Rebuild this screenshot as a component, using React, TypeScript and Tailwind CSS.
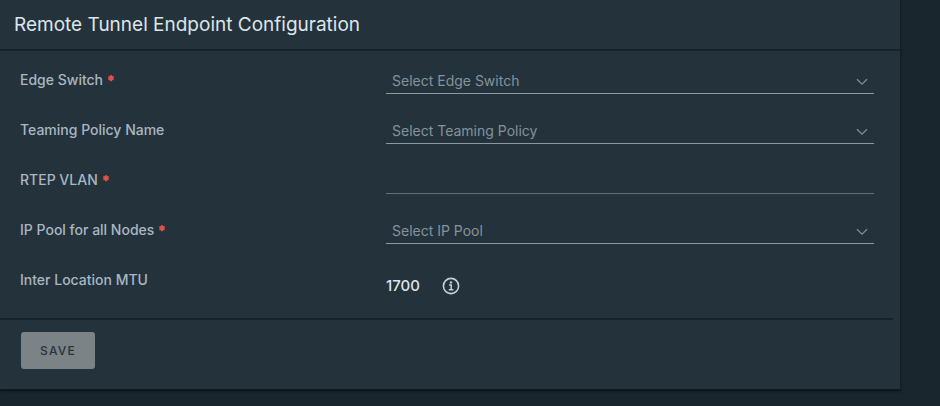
import type { FormEvent, ReactNode } from "react";

type RowProps = {
  label: string;
  htmlFor: string;
  required?: boolean;
  children: ReactNode;
};

function Row({ label, htmlFor, required, children }: RowProps) {
  return (
    <div className="grid min-h-[50px] grid-cols-[3fr_4fr] items-start">
      <label
        htmlFor={htmlFor}
        className="flex items-start gap-1 pt-1 text-sm leading-5 font-medium text-[#a9b7c2]"
      >
        {label}
        {required && (
          <svg viewBox="0 0 8 12" className="mt-1 h-3 w-2" aria-hidden="true">
            <path
              d="M4 1.2v6M1.4 2.7l5.2 3M6.6 2.7 1.4 5.7"
              stroke="#e0504a"
              strokeWidth="2"
              fill="none"
            />
          </svg>
        )}
      </label>
      {children}
    </div>
  );
}

function SelectField({ id, placeholder }: { id: string; placeholder: string }) {
  return (
    <div className="relative">
      <select
        id={id}
        defaultValue=""
        className="block h-7 w-full appearance-none border-b border-[#8a98a2] bg-transparent pt-[2px] pr-8 pl-[6px] text-sm text-[#84929b] outline-none"
      >
        <option value="">{placeholder}</option>
      </select>
      <svg
        viewBox="0 0 12 8"
        className="pointer-events-none absolute top-3 right-[6px] h-2 w-3"
        aria-hidden="true"
      >
        <path d="M1 1.2 6 6.2l5-5" stroke="#7f8e98" strokeWidth="1.3" fill="none" />
      </svg>
    </div>
  );
}

export default function App() {
  const handleSubmit = (event: FormEvent) => event.preventDefault();

  return (
    <div className="min-h-screen bg-[#1a262e] pr-10 font-['Inter','Liberation_Sans',sans-serif]">
      <form
        onSubmit={handleSubmit}
        className="border-b-2 border-[#0d181f] bg-[#24323c] shadow-[1px_1px_2px_#101b22]"
      >
        <header className="border-b-2 border-[#17232b] px-[14px] pt-[13px] pb-3">
          <h1 className="text-[19px] leading-6 font-normal text-[#dde5ea]">
            Remote Tunnel Endpoint Configuration
          </h1>
        </header>

        <div className="pt-[15px] pr-[26px] pl-5">
          <Row label="Edge Switch" htmlFor="edge-switch" required>
            <SelectField id="edge-switch" placeholder="Select Edge Switch" />
          </Row>
          <Row label="Teaming Policy Name" htmlFor="teaming-policy">
            <SelectField id="teaming-policy" placeholder="Select Teaming Policy" />
          </Row>
          <Row label="RTEP VLAN" htmlFor="rtep-vlan" required>
            <input
              id="rtep-vlan"
              type="text"
              className="block h-7 w-full border-b border-[#5f6d77] bg-transparent px-[6px] text-sm text-[#dde5ea] outline-none"
            />
          </Row>
          <Row label="IP Pool for all Nodes" htmlFor="ip-pool" required>
            <SelectField id="ip-pool" placeholder="Select IP Pool" />
          </Row>
          <Row label="Inter Location MTU" htmlFor="mtu">
            <div className="flex items-center gap-[22px] pt-[10px]">
              <output id="mtu" className="text-[15px] leading-5 font-medium text-[#dde5ea]">
                1700
              </output>
              <button type="button" aria-label="About MTU">
                <svg viewBox="0 0 18 18" className="block h-[18px] w-[18px]" fill="none">
                  <circle cx="9" cy="9" r="7.6" stroke="#c5d0d7" strokeWidth="1.6" />
                  <circle cx="9" cy="5.4" r="1.2" fill="#c5d0d7" />
                  <path d="M7 8h2.2v4.8M6.8 12.8h4.6" stroke="#c5d0d7" strokeWidth="1.5" />
                </svg>
              </button>
            </div>
          </Row>
        </div>

        <footer className="mt-[2px] mr-[7px] border-t-2 border-[#17232b] pt-3 pb-5 pl-[21px]">
          <button
            type="submit"
            className="block h-[37px] w-[74px] rounded-[3px] bg-[#7b8387] text-xs font-medium tracking-widest text-[#28343b]"
          >
            SAVE
          </button>
        </footer>
      </form>
    </div>
  );
}
